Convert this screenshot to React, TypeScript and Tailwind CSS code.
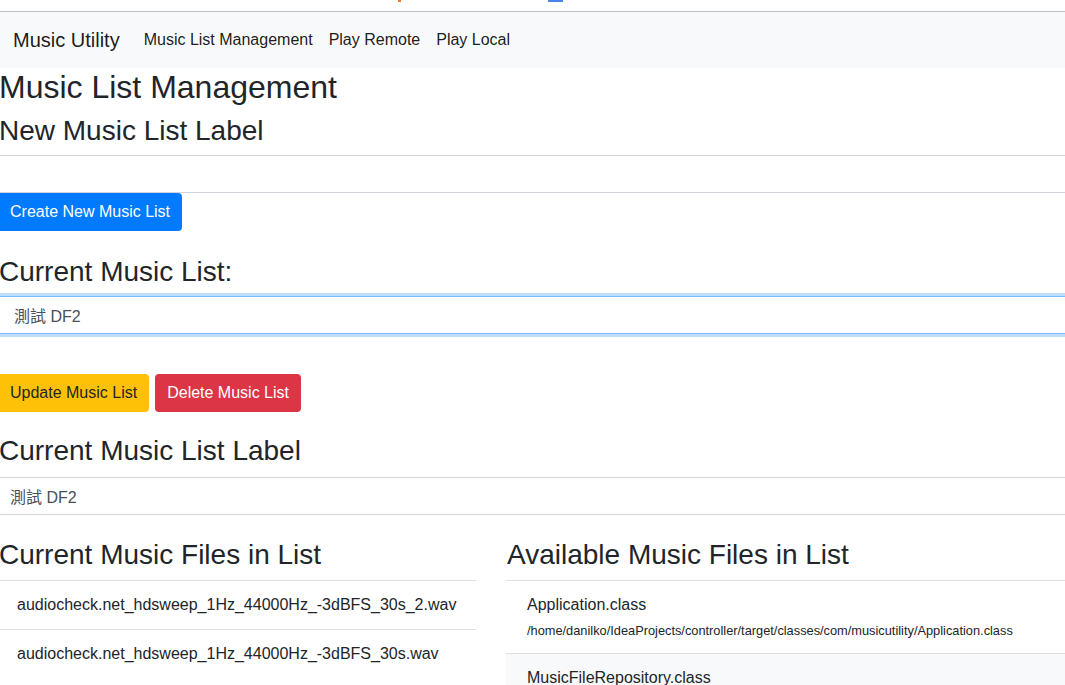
const currentFiles = [
  "audiocheck.net_hdsweep_1Hz_44000Hz_-3dBFS_30s_2.wav",
  "audiocheck.net_hdsweep_1Hz_44000Hz_-3dBFS_30s.wav",
];

const availableFiles = [
  {
    name: "Application.class",
    path: "/home/danilko/IdeaProjects/controller/target/classes/com/musicutility/Application.class",
  },
  {
    name: "MusicFileRepository.class",
    path: "/home/danilko/IdeaProjects/controller/target/classes/com/musicutility/MusicFileRepository.class",
  },
];

const App = () => {
  return (
    <div className="min-h-screen bg-white font-['Liberation_Sans','Noto_Sans_CJK_TC',sans-serif] text-[#212529] overflow-hidden">
      {/* Browser strip left over from the capture */}
      <div className="h-[12px] border-b border-[#c0c0c0] bg-white flex">
        <div className="ml-[398px] w-[3px] h-[2px] bg-[#f47b20]" />
        <div className="ml-[147px] w-[15px] h-[2px] bg-[#4a86e8]" />
      </div>

      {/* Navbar */}
      <nav className="h-[56px] bg-[#f8f9fa] flex items-center pl-[13px]">
        <span className="text-[20px] leading-[30px] text-black/90 mr-[24px]">
          Music Utility
        </span>
        <div className="flex gap-4 text-[16px] leading-6 text-black/90">
          <span>Music List Management</span>
          <span>Play Remote</span>
          <span>Play Local</span>
        </div>
      </nav>

      <h2 className="text-[32px] leading-[38px] mb-2 -ml-[1px]">Music List Management</h2>

      {/* New list */}
      <h3 className="text-[28px] leading-[34px] mb-[7px] -ml-[1px]">New Music List Label</h3>
      <div className="h-[38px] border-y border-[#ced4da]" />
      <button className="h-[38px] bg-[#007bff] text-white text-[16px] pl-[10px] pr-3 rounded-r-[4px]">
        Create New Music List
      </button>

      {/* Current list select */}
      <h3 className="text-[28px] leading-[34px] mt-6 mb-[7px] -ml-[1px]">Current Music List:</h3>
      <div className="h-[38px] border-y border-[#80bdff] shadow-[0_0_0_3px_rgba(0,123,255,0.25)] flex items-center pl-[14px] pt-[4px] text-[16px] text-[#495057]">
        測試 DF2
      </div>

      <div className="mt-[40px] flex">
        <button className="h-[38px] bg-[#ffc107] text-[#212529] text-[16px] pl-[10px] pr-3 rounded-r-[4px]">
          Update Music List
        </button>
        <button className="h-[38px] ml-[6px] bg-[#dc3545] text-white text-[16px] px-3 rounded-[4px]">
          Delete Music List
        </button>
      </div>

      {/* Current label */}
      <h3 className="text-[28px] leading-[34px] mt-[22px] mb-[9px] -ml-[1px]">Current Music List Label</h3>
      <div className="h-[38px] border-y border-[#ced4da] flex items-center pl-[10px] pt-[4px] text-[16px] text-[#495057]">
        測試 DF2
      </div>

      {/* Files */}
      <div className="flex mt-[23px]">
        <div className="w-[476px] shrink-0">
          <h3 className="text-[28px] leading-[34px] mb-2 -ml-[1px]">Current Music Files in List</h3>
          <ul>
            {currentFiles.map((file) => (
              <li
                key={file}
                className="border-t border-[#dfdfdf] pl-[17px] py-3 text-[16px] leading-6"
              >
                {file}
              </li>
            ))}
          </ul>
        </div>

        <div className="flex-1 ml-[30px]">
          <h3 className="text-[28px] leading-[34px] mb-2 pl-px">Available Music Files in List</h3>
          <ul>
            {availableFiles.map((file, index) => (
              <li
                key={file.name}
                className={`border-t border-[#dfdfdf] pl-[21px] pt-3 pb-[13px] ${
                  index === 1 ? "bg-[#f8f9fa]" : "bg-white"
                }`}
              >
                <p className="text-[16px] leading-6 mb-1">{file.name}</p>
                <p className="text-[12.8px] leading-[19px]">{file.path}</p>
              </li>
            ))}
          </ul>
        </div>
      </div>
    </div>
  );
};

export default App;
